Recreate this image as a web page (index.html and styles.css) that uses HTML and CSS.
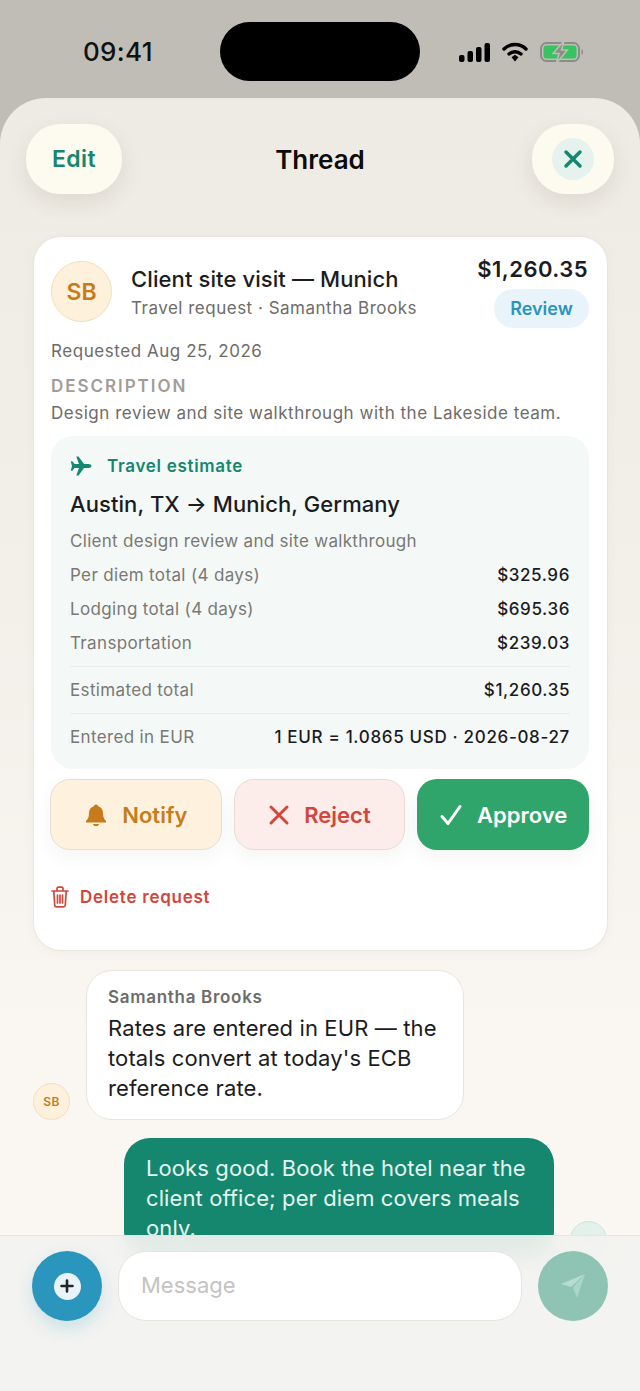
FILE: index.html
```html
<!DOCTYPE html>
<html lang="en">
<head>
  <meta charset="UTF-8">
  <title>Thread</title>
  <link rel="stylesheet" href="styles.css">
</head>
<body>
  <div class="phone">
    <div class="statusbar">
      <span class="clock">09:41</span>
      <div class="island"></div>
      <div class="status-icons">
        <svg width="31" height="19" viewBox="0 0 31 19"><rect x="0" y="12" width="5.500" height="7" rx="2"/><rect x="8.500" y="8" width="5.500" height="11" rx="2"/><rect x="17" y="4" width="5.500" height="15" rx="2"/><rect x="25.500" y="0" width="5.500" height="19" rx="2"/></svg>
        <svg width="26" height="20" viewBox="0 0 26 20"><path d="M2 7 C8 1 18 1 24 7" fill="none" stroke="#000" stroke-width="3.400" stroke-linecap="round"/><path d="M7 12 C10.500 9 15.500 9 19 12" fill="none" stroke="#000" stroke-width="3.400" stroke-linecap="round"/><path d="M9.500 15.200 L13 12.800 L16.500 15.200 L13 19.500 Z"/></svg>
        <svg width="44" height="22" viewBox="0 0 44 22">
          <rect x="1" y="2" width="38" height="18" rx="5.500" fill="none" stroke="#8d8c87" stroke-width="2"/>
          <rect x="3.500" y="4.500" width="33" height="13" rx="3" fill="#35c45f"/>
          <path d="M24 0 L13 12.500 H19 L16.500 22 L27.500 9 H21.500 Z" fill="#8d8c87" stroke="#c0bdb7" stroke-width="1.500"/>
          <path d="M41.500 8 C43.500 9 43.500 13 41.500 14 Z" fill="#8d8c87"/>
        </svg>
      </div>
    </div>

    <div class="sheet">
      <div class="topbar">
        <button class="pill edit">Edit</button>
        <h1>Thread</h1>
        <button class="pill close">
          <span class="close-dot">
            <svg width="20" height="20" viewBox="0 0 20 20"><path d="M3 3 L17 17 M17 3 L3 17" fill="none" stroke="#16876f" stroke-width="3.500" stroke-linecap="round"/></svg>
          </span>
        </button>
      </div>

      <div class="card">
        <div class="card-head">
          <div class="avatar">SB</div>
          <div class="head-text">
            <div class="req-title">Client site visit — Munich</div>
            <div class="req-sub">Travel request · Samantha Brooks</div>
          </div>
          <div class="head-right">
            <div class="req-amount">$1,260.35</div>
            <div class="badge">Review</div>
          </div>
        </div>
        <p class="requested">Requested Aug 25, 2026</p>
        <div class="label">DESCRIPTION</div>
        <p class="desc">Design review and site walkthrough with the Lakeside team.</p>

        <div class="estimate">
          <div class="est-head">
            <svg width="22" height="20" viewBox="0 0 22 20"><path d="M21.500 10 C21.500 8.800 20 8 18.500 8 H14 L8.500 0.500 H6.300 L9 8 H4.500 L2.300 5.300 H0.800 L2 10 L0.800 14.700 H2.300 L4.500 12 H9 L6.300 19.500 H8.500 L14 12 H18.500 C20 12 21.500 11.200 21.500 10 Z" fill="#16876f"/></svg>
            <span>Travel estimate</span>
          </div>
          <div class="route">Austin, TX → Munich, Germany</div>
          <div class="purpose">Client design review and site walkthrough</div>
          <div class="row"><span>Per diem total (4 days)</span><strong>$325.96</strong></div>
          <div class="row"><span>Lodging total (4 days)</span><strong>$695.36</strong></div>
          <div class="row"><span>Transportation</span><strong>$239.03</strong></div>
          <div class="row ruled first-ruled"><span>Estimated total</span><strong>$1,260.35</strong></div>
          <div class="row ruled"><span>Entered in EUR</span><strong class="rate">1 EUR = 1.0865 USD · 2026-08-27</strong></div>
        </div>

        <div class="actions">
          <button class="act notify">
            <svg width="24" height="24" viewBox="0 0 24 24"><path d="M12 1.500 C13.300 1.500 14 2.300 14.200 3.200 C17.300 4.100 19 6.800 19 10 C19 14 20 16 22 18 V19.500 H2 V18 C4 16 5 14 5 10 C5 6.800 6.700 4.100 9.800 3.200 C10 2.300 10.700 1.500 12 1.500 Z M9 21 H15 C14.700 22.500 13.500 23.200 12 23.200 C10.500 23.200 9.300 22.500 9 21 Z" fill="#c67c1c"/></svg>
            Notify
          </button>
          <button class="act reject">
            <svg width="22" height="22" viewBox="0 0 22 22"><path d="M3 3 L19 19 M19 3 L3 19" fill="none" stroke="#d2463c" stroke-width="3" stroke-linecap="round"/></svg>
            Reject
          </button>
          <button class="act approve">
            <svg width="24" height="24" viewBox="0 0 24 24"><path d="M3 13.500 L9 20.500 L21 3.500" fill="none" stroke="#fff" stroke-width="3" stroke-linecap="round" stroke-linejoin="round"/></svg>
            Approve
          </button>
        </div>

        <div class="delete">
          <svg width="18" height="22" viewBox="0 0 18 22" fill="none" stroke="#d2463c" stroke-width="1.700" stroke-linecap="round" stroke-linejoin="round"><path d="M1 5 H17 M6 5 V2.500 C6 1.700 6.500 1.200 7.300 1.200 H10.700 C11.500 1.200 12 1.700 12 2.500 V5 M2.800 5 L3.700 19 C3.800 20.200 4.500 20.800 5.600 20.800 H12.400 C13.500 20.800 14.200 20.200 14.300 19 L15.200 5 M6.500 9 V17 M9 9 V17 M11.500 9 V17"/></svg>
          <span>Delete request</span>
        </div>
      </div>

      <div class="msg incoming">
        <div class="mini-avatar">SB</div>
        <div class="bubble">
          <div class="sender">Samantha Brooks</div>
          Rates are entered in EUR — the totals convert at today's ECB reference rate.
        </div>
      </div>

      <div class="msg outgoing">
        <div class="bubble">Looks good. Book the hotel near the client office; per diem covers meals only.</div>
        <div class="mini-avatar mine"></div>
      </div>

      <div class="composer">
        <button class="round plus">
          <span class="plus-dot">
            <svg width="14" height="14" viewBox="0 0 14 14"><path d="M7 1.500 V12.500 M1.500 7 H12.500" stroke="#24242a" stroke-width="2.600" stroke-linecap="round"/></svg>
          </span>
        </button>
        <div class="input">Message</div>
        <button class="round send">
          <svg width="26" height="26" viewBox="0 0 26 26"><path d="M25 1 L1 11 L11 14 Z" fill="#b5dcd0"/><path d="M25 1 L13 14.500 L17 25 Z" fill="#a9d6c8"/></svg>
        </button>
      </div>
    </div>
  </div>
</body>
</html>
```

FILE: styles.css
```css
* {
  box-sizing: border-box;
}

html, body {
  margin: 0;
  padding: 0;
}

body {
  font-family: "Inter", "Liberation Sans", sans-serif;
  color: #1c1c1e;
}

button {
  font-family: inherit;
  border: none;
  padding: 0;
}

p {
  margin: 0;
}

.phone {
  width: 640px;
  height: 1391px;
  overflow: hidden;
  background: #c0bdb7;
  display: flex;
  flex-direction: column;
}

/* status bar */
.statusbar {
  height: 98px;
  flex: none;
  position: relative;
  display: flex;
  justify-content: space-between;
  padding: 0 56px 0 83px;
}

.clock {
  font-size: 26px;
  font-weight: 500;
  letter-spacing: 0.300px;
  color: #111;
  margin-top: 37px;
  line-height: 30px;
}

.island {
  position: absolute;
  left: 220px;
  top: 22px;
  width: 200px;
  height: 59px;
  border-radius: 30px;
  background: #000;
}

.status-icons {
  display: flex;
  align-items: center;
  gap: 12px;
  height: 22px;
  margin-top: 41px;
}

/* sheet */
.sheet {
  flex: 1;
  position: relative;
  border-radius: 46px 46px 0 0;
  background: linear-gradient(180deg, #eeebe4 0%, #f3f0ea 40%, #faf7f2 75%, #fbf8f4 100%);
  overflow: hidden;
  padding: 26px 32px 0 33px;
}

.topbar {
  display: grid;
  grid-template-columns: 1fr auto 1fr;
  align-items: center;
  height: 70px;
  margin: 0 -6px 0 -7px;
}

.topbar h1 {
  margin: 0;
  font-size: 26px;
  font-weight: 600;
  color: #0c0c0c;
}

.pill {
  height: 70px;
  border-radius: 34px;
  background: #fdfaf0;
  box-shadow: 0 8px 22px rgba(90, 80, 60, 0.12);
  display: flex;
  align-items: center;
  justify-content: center;
}

.edit {
  width: 96px;
  font-size: 23px;
  font-weight: 600;
  letter-spacing: 0.400px;
  color: #16876f;
}

.close {
  width: 82px;
  justify-self: end;
}

.close-dot {
  width: 42px;
  height: 42px;
  border-radius: 50%;
  background: #e6f2ee;
  display: flex;
  align-items: center;
  justify-content: center;
}

/* request card */
.card {
  margin-top: 42px;
  height: 715px;
  background: #fff;
  border: 1px solid #e9e6df;
  border-radius: 28px;
  padding: 24px 18px 0 17px;
  box-shadow: 0 2px 10px rgba(90, 80, 60, 0.05);
}

.card-head {
  display: flex;
  align-items: flex-start;
}

.avatar {
  width: 61px;
  height: 61px;
  flex: none;
  border-radius: 50%;
  background: #fdf1dc;
  border: 1px solid #f3dfbc;
  color: #c67c1c;
  font-size: 23px;
  font-weight: 600;
  display: flex;
  align-items: center;
  justify-content: center;
}

.head-text {
  flex: 1;
  margin-left: 19px;
  padding-top: 4px;
}

.req-title {
  font-size: 22px;
  font-weight: 500;
  letter-spacing: 0.100px;
  line-height: 28px;
  color: #1c1c1e;
}

.req-sub {
  margin-top: 3px;
  font-size: 17px;
  letter-spacing: 0.500px;
  line-height: 24px;
  color: #6e6c69;
}

.head-right {
  display: flex;
  flex-direction: column;
  align-items: flex-end;
  margin-top: -6px;
}

.req-amount {
  font-size: 22px;
  font-weight: 600;
  letter-spacing: 0.450px;
  line-height: 28px;
  margin-right: 1px;
}

.badge {
  margin-top: 6px;
  height: 39px;
  width: 95px;
  border-radius: 20px;
  background: #e8f4f9;
  color: #2a95bd;
  font-size: 18px;
  font-weight: 600;
  display: flex;
  align-items: center;
  justify-content: center;
}

.requested {
  margin-top: 11px;
  font-size: 17px;
  letter-spacing: 0.550px;
  line-height: 24px;
  color: #6e6c69;
}

.label {
  margin-top: 12px;
  font-size: 17px;
  line-height: 22px;
  font-weight: 600;
  letter-spacing: 1.950px;
  color: #a39c96;
}

.desc {
  margin-top: 4px;
  font-size: 17px;
  letter-spacing: 0.520px;
  line-height: 24px;
  color: #6e6c69;
}

/* travel estimate */
.estimate {
  margin-top: 11px;
  border-radius: 22px;
  background: #f4f8f7;
  padding: 16px 19px 9px;
}

.est-head {
  display: flex;
  align-items: center;
  gap: 15px;
  height: 28px;
  color: #16876f;
  font-size: 17px;
  font-weight: 600;
  letter-spacing: 0.700px;
}

.route {
  margin-top: 9px;
  font-size: 22px;
  font-weight: 500;
  letter-spacing: 0.080px;
  line-height: 30px;
  color: #1c1c1e;
}

.purpose {
  margin-top: 10px;
  font-size: 17px;
  letter-spacing: 0.300px;
  line-height: 24px;
  color: #7a7875;
}

.row {
  display: flex;
  justify-content: space-between;
  align-items: center;
  height: 34px;
  font-size: 17px;
  letter-spacing: 0.350px;
  color: #7a7875;
}

.purpose + .row {
  margin-top: 5px;
}

.row strong {
  font-weight: 500;
  letter-spacing: 0.600px;
  color: #1c1c1e;
}

.row strong.rate {
  letter-spacing: 0.670px;
}

.row.ruled {
  border-top: 1px solid #e9eeec;
  height: 47px;
}

.first-ruled {
  margin-top: 6px;
}

/* action buttons */
.actions {
  display: grid;
  grid-template-columns: repeat(3, 1fr);
  gap: 12px;
  margin: 10px 0 0 -1px;
}

.act {
  height: 71px;
  border-radius: 20px;
  font-size: 22px;
  font-weight: 600;
  display: flex;
  align-items: center;
  justify-content: center;
  gap: 14px;
  box-shadow: 0 8px 18px rgba(90, 80, 60, 0.06);
}

.notify {
  background: #fef2de;
  border: 1px solid #e8ddcf;
  color: #c67c1c;
}

.reject {
  background: #fcecea;
  border: 1px solid #e8dcd9;
  color: #d2463c;
}

.approve {
  background: #2fa56c;
  color: #fff;
}

.delete {
  margin-top: 36px;
  display: flex;
  align-items: center;
  gap: 11px;
  color: #d2463c;
  font-size: 17px;
  font-weight: 600;
  letter-spacing: 0.750px;
}

/* messages */
.msg {
  display: flex;
  align-items: flex-end;
}

.incoming {
  margin-top: 19px;
}

.mini-avatar {
  width: 37px;
  height: 37px;
  flex: none;
  border-radius: 50%;
  background: #fdf1dc;
  border: 1px solid #f3dfbc;
  color: #c67c1c;
  font-size: 12px;
  font-weight: 600;
  letter-spacing: 0.400px;
  display: flex;
  align-items: center;
  justify-content: center;
}

.bubble {
  font-size: 22px;
  line-height: 30px;
}

.incoming .bubble {
  margin-left: 16px;
  width: 378px;
  background: #fff;
  border: 1px solid #e9e6df;
  border-radius: 26px;
  padding: 15px 21px 16px;
  letter-spacing: 0.120px;
  color: #1c1c1e;
}

.sender {
  font-size: 17px;
  font-weight: 600;
  letter-spacing: 0.700px;
  line-height: 22px;
  color: #6e6c69;
  margin-bottom: 5px;
}

.outgoing {
  margin-top: 18px;
  margin-left: 91px;
}

.outgoing .bubble {
  width: 430px;
  background: #16876f;
  color: #e3f6ef;
  border-radius: 26px;
  padding: 15px 22px;
  letter-spacing: 0.100px;
}

.mine {
  margin-left: 16px;
  background: #e3f1ec;
  border-color: #cfe5dc;
}

/* composer, lies over the thread */
.composer {
  position: absolute;
  left: 0;
  right: 0;
  bottom: 0;
  height: 156px;
  padding: 15px 32px 0;
  display: flex;
  align-items: flex-start;
  gap: 16px;
  border-top: 1px solid #e7e5e0;
  background: rgba(242, 242, 240, 0.93);
  backdrop-filter: blur(10px);
}

.round {
  width: 70px;
  height: 70px;
  flex: none;
  border-radius: 50%;
  display: flex;
  align-items: center;
  justify-content: center;
}

.plus {
  background: #2a95bd;
  box-shadow: 0 8px 18px rgba(42, 149, 189, 0.2);
}

.plus-dot {
  width: 27px;
  height: 27px;
  border-radius: 50%;
  background: #e9f4f9;
  display: flex;
  align-items: center;
  justify-content: center;
}

.input {
  flex: 1;
  height: 70px;
  background: #fff;
  border: 1px solid #e7e3de;
  border-radius: 28px;
  padding: 0 0 2px 22px;
  display: flex;
  align-items: center;
  font-size: 22px;
  color: #c4c3c1;
}

.send {
  background: #8fc4b5;
}
```
